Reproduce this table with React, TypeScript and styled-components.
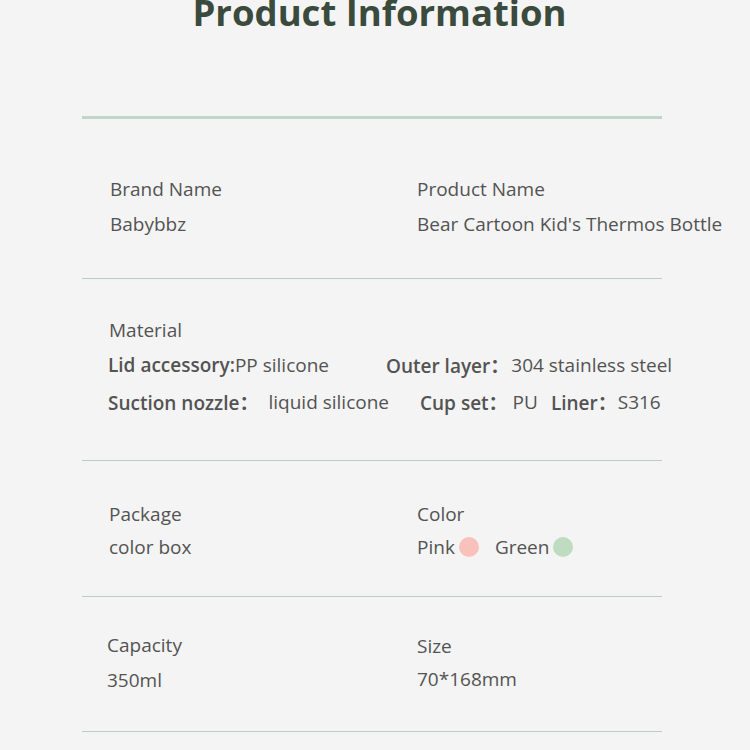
import React from 'react';
import styled, { createGlobalStyle } from 'styled-components';

const GlobalStyle = createGlobalStyle`
  html, body {
    margin: 0;
    padding: 0;
    background: #f4f4f4;
  }
  body {
    font-family: 'Open Sans', 'Noto Sans CJK SC', sans-serif;
    color: #535353;
    overflow: hidden;
  }
`;

const Page = styled.div`
  width: 750px;
  height: 750px;
  overflow: hidden;
`;

const Title = styled.h1`
  margin: -16px 0 0;
  height: 132px;
  text-align: center;
  font-family: 'Open Sans', sans-serif;
  font-weight: 700;
  font-size: 36.5px;
  line-height: 56px;
  color: #3a4a3c;
  box-sizing: border-box;
  padding-left: 9px;
`;

const Table = styled.div`
  width: 580px;
  margin-left: 82px;
  border-top: 3px solid #c0d6ca;
`;

const Section = styled.div<{ $h: number; $pt: number }>`
  height: ${(p) => p.$h}px;
  padding-top: ${(p) => p.$pt}px;
  box-sizing: border-box;
  border-bottom: 1px solid #b8cfc3;
`;

const Grid = styled.div<{ $indent?: number }>`
  display: grid;
  grid-template-columns: 307px 1fr;
  padding-left: ${(p) => p.$indent ?? 28}px;
`;

const Cell = styled.div<{ $shift?: number; $top?: number }>`
  display: flex;
  flex-direction: column;
  margin-left: ${(p) => p.$shift ?? 0}px;
  margin-top: ${(p) => p.$top ?? 0}px;
`;

const Line = styled.div<{ $h?: number }>`
  height: ${(p) => p.$h ?? 35}px;
  font-size: 19px;
  line-height: 24px;
  white-space: nowrap;
  display: flex;
  align-items: center;
`;

const SpecRow = styled.div<{ $h?: number }>`
  height: ${(p) => p.$h ?? 37}px;
  display: flex;
  align-items: center;
  font-size: 19px;
  white-space: nowrap;
  padding-left: 26px;
`;

const Key = styled.span<{ $ml?: number }>`
  font-weight: 600;
  color: #535353;
  margin-left: ${(p) => p.$ml ?? 0}px;
`;

const Val = styled.span<{ $ml?: number }>`
  margin-left: ${(p) => p.$ml ?? 0}px;
`;

const Dot = styled.span<{ $c: string }>`
  display: inline-block;
  width: 20px;
  height: 20px;
  border-radius: 50%;
  background: ${(p) => p.$c};
  margin-left: 4px;
  margin-right: 16px;
`;

export default function App() {
  return (
    <Page>
      <GlobalStyle />
      <Title>Product Information</Title>
      <Table>
        <Section $h={160} $pt={52}>
          <Grid>
            <Cell>
              <Line>Brand Name</Line>
              <Line>Babybbz</Line>
            </Cell>
            <Cell>
              <Line>Product Name</Line>
              <Line>Bear Cartoon Kid's Thermos Bottle</Line>
            </Cell>
          </Grid>
        </Section>
        <Section $h={182} $pt={33}>
          <Grid $indent={27}>
            <Cell>
              <Line>Material</Line>
            </Cell>
          </Grid>
          <SpecRow $h={36}>
            <Key>Lid accessory:</Key>
            <Val>PP silicone</Val>
            <Key $ml={57}>Outer layer：</Key>
            <Val $ml={2}>304 stainless steel</Val>
          </SpecRow>
          <SpecRow>
            <Key>Suction nozzle：</Key>
            <Val $ml={10}>liquid silicone</Val>
            <Key $ml={31}>Cup set：</Key>
            <Val $ml={5}>PU</Val>
            <Key $ml={13}>Liner：</Key>
            <Val $ml={1}>S316</Val>
          </SpecRow>
        </Section>
        <Section $h={136} $pt={36}>
          <Grid $indent={27}>
            <Cell>
              <Line $h={33}>Package</Line>
              <Line $h={33}>color box</Line>
            </Cell>
            <Cell $shift={1}>
              <Line $h={33}>Color</Line>
              <Line $h={33}>
                Pink<Dot $c="#f8c1bc" />Green<Dot $c="#bfdcc0" />
              </Line>
            </Cell>
          </Grid>
        </Section>
        <Section $h={135} $pt={30}>
          <Grid $indent={25}>
            <Cell>
              <Line>Capacity</Line>
              <Line>350ml</Line>
            </Cell>
            <Cell $shift={3} $top={2}>
              <Line $h={33}>Size</Line>
              <Line $h={33}>70*168mm</Line>
            </Cell>
          </Grid>
        </Section>
      </Table>
    </Page>
  );
}
